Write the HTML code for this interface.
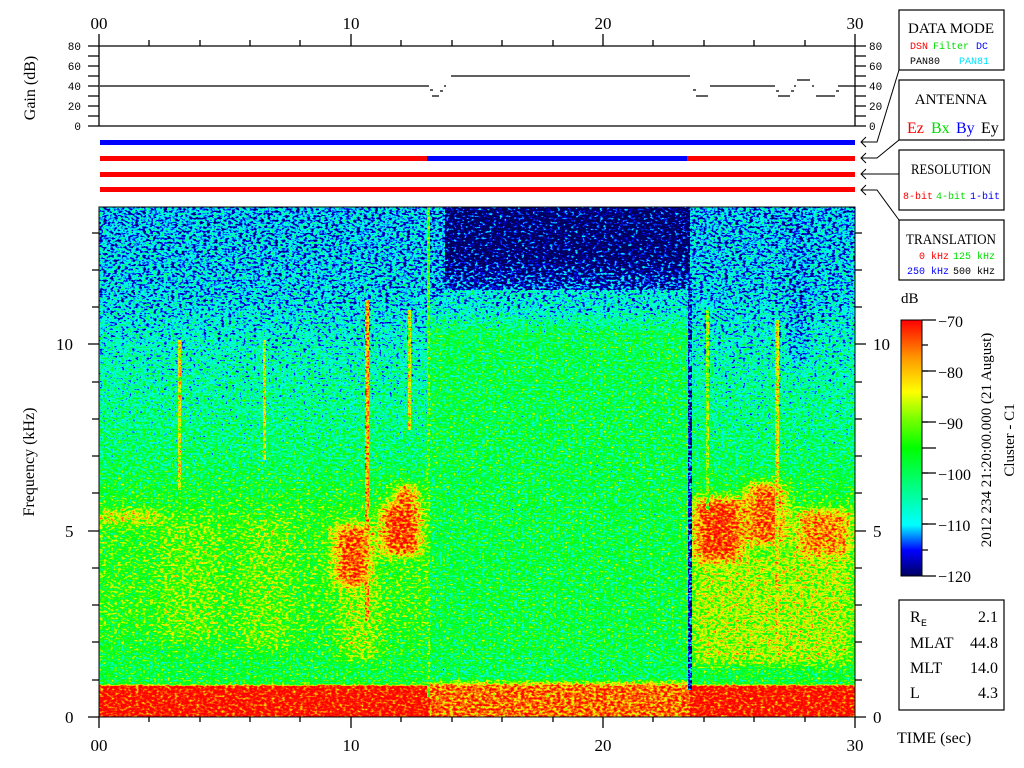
<!DOCTYPE html>
<html><head><meta charset="utf-8"><style>
html,body{margin:0;padding:0;background:#fff;width:1024px;height:768px;overflow:hidden}
svg{display:block;font-family:"Liberation Serif",serif}
.m,.m text{font-family:"Liberation Mono",monospace}
</style></head><body>
<svg width="1024" height="768" viewBox="0 0 1024 768" xmlns="http://www.w3.org/2000/svg">
<defs>
<filter id="jet" filterUnits="userSpaceOnUse" x="99" y="207" width="756" height="510" color-interpolation-filters="sRGB">
 <feTurbulence type="fractalNoise" baseFrequency="0.28 0.45" numOctaves="2" seed="3" result="n"/>
 <feColorMatrix in="n" type="matrix" values="1 0 0 0 0 1 0 0 0 0 1 0 0 0 0 0 0 0 0 1" result="n2"/>
 <feComposite in="SourceGraphic" in2="n2" operator="arithmetic" k1="0" k2="1" k3="0.8" k4="-0.4" result="s"/>
 <feComponentTransfer in="s">
  <feFuncR type="table" tableValues="0 0 0 0 0 0 0.5 1 1 1 1"/>
  <feFuncG type="table" tableValues="0 0 1 1 1 1 1 1 0.6 0.2 0"/>
  <feFuncB type="table" tableValues="0.35 1 1 0.7 0.3 0 0 0 0 0 0"/>
  <feFuncA type="discrete" tableValues="1"/>
 </feComponentTransfer>
</filter>
<filter id="bl" filterUnits="userSpaceOnUse" x="0" y="150" width="1000" height="650" color-interpolation-filters="sRGB">
 <feGaussianBlur stdDeviation="7 5"/>
</filter>
<linearGradient id="gL" x1="0" y1="207" x2="0" y2="717" gradientUnits="userSpaceOnUse">
 <stop offset="0" stop-color="#2c2c2c"/><stop offset="0.17" stop-color="#323232"/>
 <stop offset="0.3" stop-color="#484848"/><stop offset="0.5" stop-color="#626262"/>
 <stop offset="0.6" stop-color="#808080"/><stop offset="0.8" stop-color="#848484"/>
 <stop offset="0.9" stop-color="#6e6e6e"/><stop offset="0.935" stop-color="#747474"/>
 <stop offset="0.94" stop-color="#f4f4f4"/><stop offset="1" stop-color="#f4f4f4"/>
</linearGradient>
<linearGradient id="gM" x1="0" y1="207" x2="0" y2="717" gradientUnits="userSpaceOnUse">
 <stop offset="0" stop-color="#303030"/><stop offset="0.2" stop-color="#3c3c3c"/>
 <stop offset="0.25" stop-color="#686868"/><stop offset="0.85" stop-color="#6e6e6e"/>
 <stop offset="0.925" stop-color="#646464"/><stop offset="0.94" stop-color="#d8d8d8"/>
 <stop offset="1" stop-color="#d8d8d8"/>
</linearGradient>
<linearGradient id="gB" x1="0" y1="207" x2="0" y2="290" gradientUnits="userSpaceOnUse">
 <stop offset="0" stop-color="#000"/><stop offset="0.6" stop-color="#000"/><stop offset="1" stop-color="#1c1c1c"/>
</linearGradient>
<linearGradient id="cb" x1="0" y1="576" x2="0" y2="320" gradientUnits="userSpaceOnUse">
 <stop offset="0" stop-color="#000060"/><stop offset="0.1" stop-color="#0000ff"/>
 <stop offset="0.2" stop-color="#00ffff"/><stop offset="0.35" stop-color="#00ff80"/>
 <stop offset="0.5" stop-color="#00ff00"/><stop offset="0.62" stop-color="#80ff00"/>
 <stop offset="0.72" stop-color="#ffff00"/><stop offset="0.85" stop-color="#ff9900"/>
 <stop offset="1" stop-color="#ff0000"/>
</linearGradient>
</defs>

<!-- spectrogram -->
<g filter="url(#jet)">
 <rect x="99" y="207" width="756" height="510" fill="url(#gL)"/>
 <rect x="430" y="207" width="260" height="510" fill="url(#gM)"/>
 <rect x="445" y="207" width="245" height="83" fill="url(#gB)"/>
 <rect x="430" y="207" width="15" height="90" fill="#2a2a2a"/>
 <g filter="url(#bl)">
  <rect x="99" y="512" width="60" height="10" fill="#c0c0c0"/>
  <rect x="160" y="520" width="60" height="120" fill="#909090"/>
  <rect x="240" y="520" width="50" height="130" fill="#909090"/>
  <rect x="340" y="585" width="40" height="75" fill="#9a9a9a"/>
  <rect x="335" y="525" width="35" height="60" fill="#e0e0e0"/>
  <rect x="382" y="505" width="38" height="50" fill="#e8e8e8"/>
  <rect x="395" y="485" width="22" height="30" fill="#e0e0e0"/>
  <rect x="692" y="555" width="160" height="110" fill="#a0a0a0"/>
  <rect x="694" y="498" width="48" height="62" fill="#e6e6e6"/>
  <rect x="747" y="483" width="38" height="62" fill="#dcdcdc"/>
  <rect x="797" y="510" width="53" height="45" fill="#d0d0d0"/>
  <rect x="792" y="215" width="12" height="150" fill="#222222"/>
 </g>
 <rect x="688" y="290" width="4" height="400" fill="#181818"/>
 <rect x="427" y="207" width="3" height="490" fill="#8a8a8a"/>
 <rect x="365" y="300" width="4" height="320" fill="#c8c8c8"/>
 <rect x="178" y="340" width="3" height="150" fill="#aaaaaa"/>
 <rect x="263" y="340" width="3" height="120" fill="#aaaaaa"/>
 <rect x="408" y="310" width="3" height="120" fill="#aaaaaa"/>
 <rect x="775" y="320" width="4" height="340" fill="#b0b0b0"/>
 <rect x="706" y="310" width="3" height="200" fill="#999999"/>
</g>
<rect x="99" y="207" width="756" height="510" fill="none" stroke="#000" stroke-width="1"/>

<!-- gain plot -->
<g stroke="#000" stroke-width="1.3" fill="none">
 <line x1="88" y1="46" x2="866" y2="46"/>
 <line x1="88" y1="126" x2="866" y2="126"/>
 <line x1="99" y1="34" x2="99" y2="126"/>
 <line x1="855" y1="34" x2="855" y2="126"/>
 <path d="M88 56H99M88 66H99M88 76H99M88 86H99M88 96H99M88 106H99M88 116H99"/>
 <path d="M855 56H866M855 66H866M855 76H866M855 86H866M855 96H866M855 106H866M855 116H866"/>
 <path d="M149 40V46M200 40V46M250 40V46M300 40V46M351 34V46M401 40V46M452 40V46M502 40V46M553 40V46M603 34V46M653 40V46M704 40V46M754 40V46M805 40V46"/>
 <path d="M100 86H429M430 90H433M432 96H439M440 91H443M444 86H446M451 76H690M693 90H696M696 96H708M710 86H775M776 91H779M778 96H790M791 91H794M794 86H796M797 80H810M812 86H814M816 96H835M836 91H839M838 86H855"/>
</g>
<g class="m" font-size="11" text-anchor="end" fill="#000">
 <text x="81" y="50">80</text><text x="81" y="70">60</text><text x="81" y="90">40</text><text x="81" y="110">20</text><text x="81" y="130">0</text>
</g>
<g class="m" font-size="11" fill="#000">
 <text x="869" y="50">80</text><text x="869" y="70">60</text><text x="869" y="90">40</text><text x="869" y="110">20</text><text x="869" y="130">0</text>
</g>
<g font-size="17" text-anchor="middle" fill="#000">
 <text x="99" y="29">00</text><text x="351" y="29">10</text><text x="603" y="29">20</text><text x="855" y="29">30</text>
</g>
<text transform="translate(35,88) rotate(-90)" font-size="16" text-anchor="middle">Gain (dB)</text>

<!-- status bars -->
<rect x="100" y="140" width="755" height="5" fill="#0000ff"/>
<rect x="100" y="156" width="327" height="5" fill="#ff0000"/>
<rect x="427" y="156" width="260" height="5" fill="#0000ff"/>
<rect x="687" y="156" width="168" height="5" fill="#ff0000"/>
<rect x="100" y="172" width="755" height="5" fill="#ff0000"/>
<rect x="100" y="187" width="755" height="5" fill="#ff0000"/>

<!-- connectors -->
<g stroke="#000" stroke-width="1" fill="none">
 <path d="M861 142H877L899 70"/><path d="M866 137L861 142L866 147"/>
 <path d="M861 158H877L899 140"/><path d="M866 153L861 158L866 163"/>
 <path d="M861 174H899"/><path d="M866 169L861 174L866 179"/>
 <path d="M861 190H877L899 220"/><path d="M866 185L861 190L866 195"/>
</g>
<g stroke="#000" stroke-width="1.2" fill="#fff">
 <rect x="899" y="10" width="105" height="60"/>
 <rect x="899" y="80" width="105" height="60"/>
 <rect x="899" y="150" width="105" height="60"/>
 <rect x="899" y="220" width="105" height="60"/>
</g>
<g font-size="15" text-anchor="middle" fill="#000">
 <text x="951" y="33" textLength="86" lengthAdjust="spacingAndGlyphs">DATA MODE</text>
 <text x="951" y="104">ANTENNA</text>
 <text x="951" y="174" textLength="80" lengthAdjust="spacingAndGlyphs">RESOLUTION</text>
 <text x="951" y="244" textLength="90" lengthAdjust="spacingAndGlyphs">TRANSLATION</text>
</g>
<g class="m" font-size="10">
 <text x="910" y="49" fill="#ff0000">DSN</text><text x="933" y="49" fill="#00dd00">Filter</text><text x="976" y="49" fill="#0000ff">DC</text>
 <text x="910" y="64" fill="#000">PAN80</text><text x="959" y="64" fill="#00e0ff">PAN81</text>
 <text x="903" y="199" fill="#ff0000">8-bit</text><text x="936" y="199" fill="#00dd00">4-bit</text><text x="970" y="199" fill="#0000ff">1-bit</text>
 <text x="919" y="259" fill="#ff0000">0 kHz</text><text x="953" y="259" fill="#00dd00">125 kHz</text>
 <text x="907" y="274" fill="#0000ff">250 kHz</text><text x="953" y="274" fill="#000">500 kHz</text>
</g>
<g font-size="16">
 <text x="907" y="133" fill="#ff0000">Ez</text><text x="931" y="133" fill="#00dd00">Bx</text><text x="956" y="133" fill="#0000ff">By</text><text x="981" y="133" fill="#000">Ey</text>
</g>

<!-- spectrogram axes -->
<g stroke="#000" stroke-width="1.3" fill="none">
 <path d="M99 717V728M149 717V722M200 717V722M250 717V722M300 717V722M351 717V728M401 717V722M452 717V722M502 717V722M553 717V722M603 717V728M653 717V722M704 717V722M754 717V722M805 717V722M855 717V728"/>
 <path d="M88 717H99M92 680H99M92 642H99M92 605H99M92 568H99M88 531H99M92 493H99M92 456H99M92 419H99M92 382H99M88 344H99M92 307H99M92 270H99M92 233H99"/>
 <path d="M855 717H866M855 680H862M855 642H862M855 605H862M855 568H862M855 531H866M855 493H862M855 456H862M855 419H862M855 382H862M855 344H866M855 307H862M855 270H862M855 233H862"/>
</g>
<g font-size="17" text-anchor="middle" fill="#000">
 <text x="99" y="751">00</text><text x="351" y="751">10</text><text x="603" y="751">20</text><text x="855" y="751">30</text>
</g>
<g font-size="17" fill="#000">
 <text x="65" y="723">0</text><text x="65" y="537">5</text><text x="56" y="350">10</text>
 <text x="873" y="723">0</text><text x="873" y="537">5</text><text x="873" y="350">10</text>
</g>
<text transform="translate(34,462) rotate(-90)" font-size="16" text-anchor="middle">Frequency (kHz)</text>
<text x="897" y="743" font-size="16">TIME (sec)</text>

<!-- colorbar -->
<text x="901" y="303" font-size="15">dB</text>
<rect x="901" y="320" width="21" height="256" fill="url(#cb)" stroke="#000" stroke-width="1"/>
<g stroke="#000" stroke-width="1.2">
 <path d="M922 320H936M922 345H928M922 371H928M922 397H928M922 422H928M922 448H936M922 473H928M922 499H928M922 524H928M922 550H928M922 576H936"/>
 <path d="M922 371H936M922 422H936M922 473H936M922 524H936"/>
</g>
<g font-size="16" fill="#000">
 <text x="938" y="327">−70</text><text x="938" y="378">−80</text><text x="938" y="429">−90</text>
 <text x="938" y="480">−100</text><text x="938" y="531">−110</text><text x="938" y="582">−120</text>
</g>
<text transform="translate(991,440) rotate(-90)" font-size="15" text-anchor="middle">2012 234 21:20:00.000 (21 August)</text>
<text transform="translate(1014,440) rotate(-90)" font-size="15" text-anchor="middle">Cluster - C1</text>

<!-- info box -->
<rect x="899" y="600" width="105" height="110" fill="#fff" stroke="#000" stroke-width="1.2"/>
<g font-size="16" fill="#000">
 <text x="910" y="622">R</text><text x="921" y="626" font-size="10" class="m">E</text>
 <text x="910" y="648">MLAT</text><text x="910" y="673">MLT</text><text x="910" y="698">L</text>
</g>
<g font-size="16" fill="#000" text-anchor="end">
 <text x="998" y="622">2.1</text><text x="998" y="648">44.8</text><text x="998" y="673">14.0</text><text x="998" y="698">4.3</text>
</g>
</svg>
</body></html>
